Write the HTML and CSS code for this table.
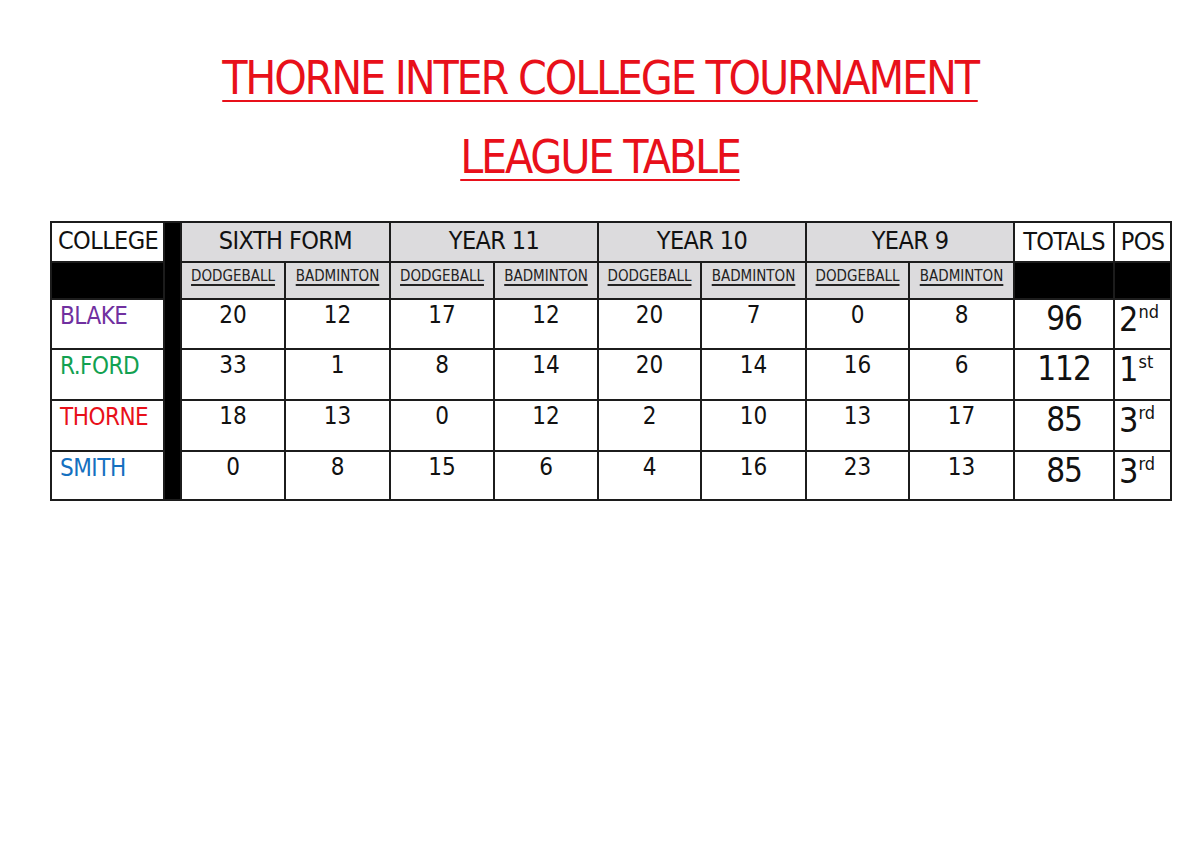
FILE: index.html
```html
<!DOCTYPE html>
<html lang="en">
<head>
<meta charset="utf-8">
<title>Thorne Inter College Tournament – League Table</title>
<link rel="stylesheet" href="styles.css">
</head>
<body>
<main class="page">
  <header class="titles">
    <h1 class="title">THORNE INTER COLLEGE TOURNAMENT</h1>
    <h2 class="title">LEAGUE TABLE</h2>
  </header>
  <table class="league">
    <colgroup>
      <col class="c-college">
      <col class="c-bar">
      <col class="c-a"><col class="c-b">
      <col class="c-a"><col class="c-a">
      <col class="c-c"><col class="c-b">
      <col class="c-c"><col class="c-b">
      <col class="c-tot">
      <col class="c-pos">
    </colgroup>
    <tbody>
      <tr class="groups">
        <th class="college-head">COLLEGE</th>
        <th class="bar" rowspan="6"></th>
        <th class="grp" colspan="2">SIXTH FORM</th>
        <th class="grp" colspan="2">YEAR 11</th>
        <th class="grp" colspan="2">YEAR 10</th>
        <th class="grp" colspan="2">YEAR 9</th>
        <th class="plain">TOTALS</th>
        <th class="plain">POS</th>
      </tr>
      <tr class="sports">
        <th class="blk"></th>
        <th class="sport"><span>DODGEBALL</span></th>
        <th class="sport"><span>BADMINTON</span></th>
        <th class="sport"><span>DODGEBALL</span></th>
        <th class="sport"><span>BADMINTON</span></th>
        <th class="sport"><span>DODGEBALL</span></th>
        <th class="sport"><span>BADMINTON</span></th>
        <th class="sport"><span>DODGEBALL</span></th>
        <th class="sport"><span>BADMINTON</span></th>
        <th class="blk"></th>
        <th class="blk"></th>
      </tr>
      <tr class="row r1">
        <td class="name blake">BLAKE</td>
        <td>20</td><td>12</td><td>17</td><td>12</td><td>20</td><td>7</td><td>0</td><td>8</td>
        <td class="total">96</td><td class="pos">2<sup>nd</sup></td>
      </tr>
      <tr class="row r2">
        <td class="name rford">R.FORD</td>
        <td>33</td><td>1</td><td>8</td><td>14</td><td>20</td><td>14</td><td>16</td><td>6</td>
        <td class="total">112</td><td class="pos">1<sup>st</sup></td>
      </tr>
      <tr class="row r3">
        <td class="name thorne">THORNE</td>
        <td>18</td><td>13</td><td>0</td><td>12</td><td>2</td><td>10</td><td>13</td><td>17</td>
        <td class="total">85</td><td class="pos">3<sup>rd</sup></td>
      </tr>
      <tr class="row r4">
        <td class="name smith">SMITH</td>
        <td>0</td><td>8</td><td>15</td><td>6</td><td>4</td><td>16</td><td>23</td><td>13</td>
        <td class="total">85</td><td class="pos">3<sup>rd</sup></td>
      </tr>
    </tbody>
  </table>
</main>
</body>
</html>
```
FILE: styles.css
```css
html, body {
  margin: 0;
  padding: 0;
  background: #ffffff;
}

body {
  font-family: "DejaVu Sans Condensed", "Liberation Sans", sans-serif;
  color: #111111;
}

.page {
  width: 1200px;
  height: 848px;
  box-sizing: border-box;
  padding: 0 0 0 50px;
  overflow: hidden;
}

.titles {
  display: flex;
  flex-direction: column;
  align-items: center;
  margin-left: -50px;
  padding-top: 52px;
  gap: 26px;
}

.title {
  margin: 0;
  font-size: 46px;
  font-weight: normal;
  line-height: 53px;
  color: #e8101a;
  letter-spacing: -2.2px;
  text-decoration: underline;
  text-decoration-thickness: 2px;
  text-underline-offset: 6px;
}

.league {
  margin-top: 37px;
  border-collapse: collapse;
  table-layout: fixed;
  width: 1122px;
}

.league th,
.league td {
  border: 2px solid #1c1c1c;
  padding: 0;
  text-align: center;
  vertical-align: top;
}

.c-college { width: 113px; }
.c-bar { width: 17px; }
.c-a { width: 104px; }
.c-b { width: 105px; }
.c-c { width: 103px; }
.c-tot { width: 100px; }
.c-pos { width: 57px; }

.groups th {
  height: 37px;
  font-size: 25px;
  font-weight: normal;
  line-height: 35px;
  letter-spacing: -0.6px;
  color: #111111;
  white-space: nowrap;
}

.groups .grp {
  background: #dcdbdd;
}

.groups .college-head {
  text-align: left;
  padding-left: 6px;
}

.groups .plain {
  padding-top: 1px;
}

.bar {
  background: #000000;
}

.sports th {
  height: 33px;
  font-weight: normal;
}

.sports .blk {
  background: #000000;
}

.sports .sport {
  background: #dcdbdd;
  font-size: 15px;
  line-height: 22px;
  padding-top: 2px;
  color: #222222;
}

.sports .sport span {
  text-decoration: underline;
  text-decoration-thickness: 2px;
  text-underline-offset: 3px;
}

.row td {
  height: 47px;
  font-size: 24px;
  line-height: 28px;
  padding-top: 1px;
}

.row.r2 td,
.row.r3 td {
  height: 48px;
}

.row.r4 td {
  height: 46px;
}

.row td.name {
  text-align: left;
  padding-left: 8px;
  font-size: 24px;
  line-height: 30px;
  letter-spacing: -0.5px;
}

.blake { color: #7030a0; }
.rford { color: #12a150; }
.thorne { color: #e8101a; }
.smith { color: #1570c0; }

.row td.total {
  font-size: 33px;
  line-height: 36px;
  letter-spacing: -1px;
}

.row td.pos {
  font-size: 34px;
  line-height: 36px;
  text-align: left;
  padding-left: 4px;
}

.row td.pos sup {
  font-size: 18px;
  line-height: 0;
  vertical-align: 13px;
}
```
